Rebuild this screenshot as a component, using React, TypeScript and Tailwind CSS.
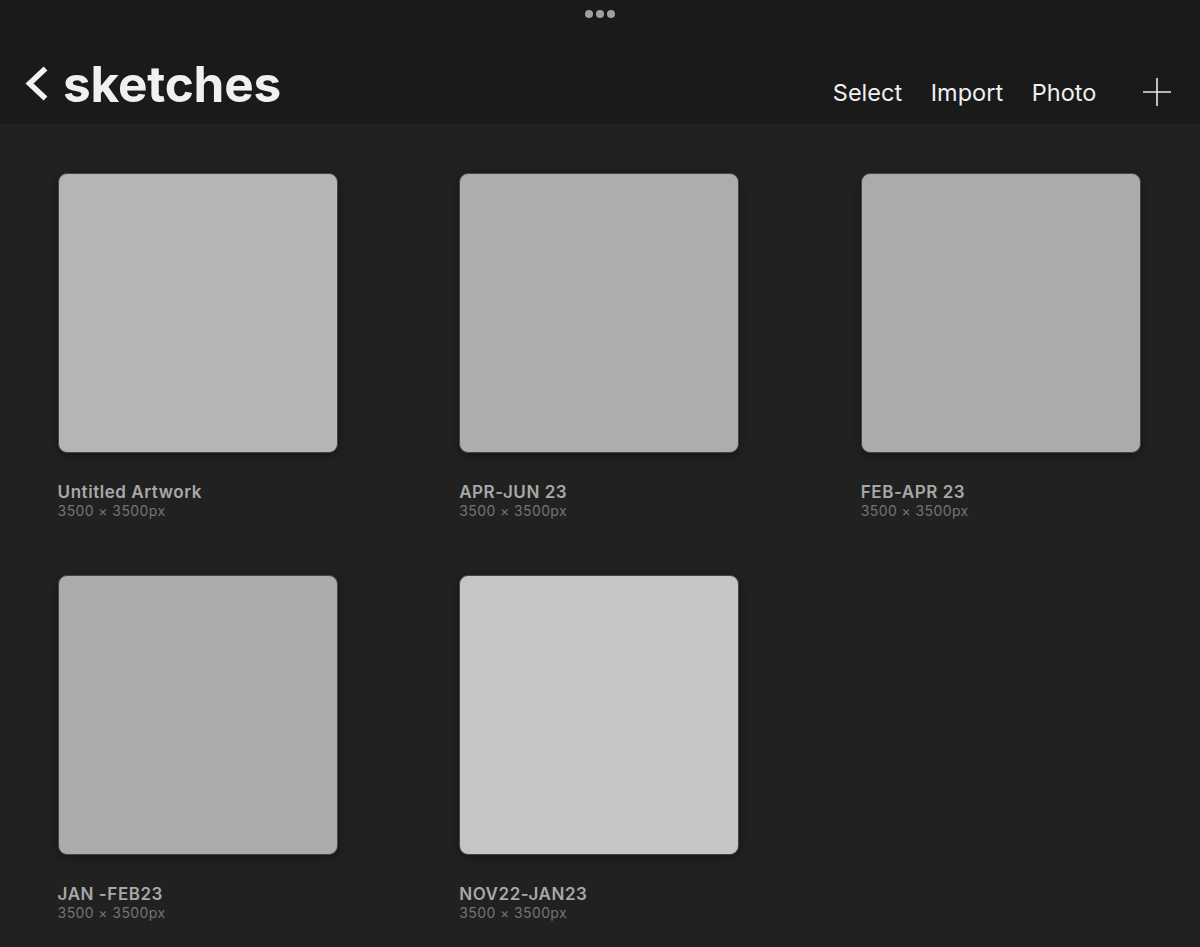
const items = [
  { name: "Untitled Artwork", bg: "bg-[#b5b5b5]" },
  { name: "APR-JUN 23", bg: "bg-[#adadad]" },
  { name: "FEB-APR 23", bg: "bg-[#ababab]" },
  { name: "JAN -FEB23", bg: "bg-[#acacac]" },
  { name: "NOV22-JAN23", bg: "bg-[#c5c5c5]" },
];

export default function App() {
  return (
    <div className="w-[1200px] h-[947px] overflow-hidden bg-[#212121] font-['Inter','Liberation_Sans',sans-serif]">
      <header className="relative h-[124px] bg-[#1a1a1a] flex items-start pt-[55px] pl-[24px] pr-[29px]">
        <div className="absolute top-[10px] left-[585px] flex gap-[3.5px]">
          <span className="w-[7.5px] h-[7.5px] rounded-full bg-[#a0a0a0]" />
          <span className="w-[7.5px] h-[7.5px] rounded-full bg-[#a0a0a0]" />
          <span className="w-[7.5px] h-[7.5px] rounded-full bg-[#a0a0a0]" />
        </div>
        <svg className="mt-[11px] w-[24px] h-[36px]" viewBox="0 0 24 36" fill="none" stroke="#f2f2f2" strokeWidth="5.5">
          <path d="M21.5 2.5 L5.5 17.5 L21.5 32.5" />
        </svg>
        <h1 className="ml-[15px] text-[49.5px] leading-[59px] font-bold tracking-[-0.2px] text-[#f0f0f0]">sketches</h1>
        <nav className="ml-auto flex items-center gap-[28.7px] mt-[19px] text-[23.5px] leading-[34px] text-[#f0f0f0]">
          <span className="mt-[2px]">Select</span>
          <span className="mt-[2px]">Import</span>
          <span className="mt-[2px]">Photo</span>
          <svg className="ml-[18px] w-[28px] h-[28px]" viewBox="0 0 28 28" stroke="#e8e8e8" strokeWidth="1.6">
            <path d="M14 0V28M0 14H28" />
          </svg>
        </nav>
      </header>
      <main className="grid grid-cols-[280px_280px_280px] gap-x-[121.6px] gap-y-[56px] pl-[57.6px] pt-[49px]">
        {items.map((it) => (
          <div key={it.name}>
            <div className={`h-[280px] rounded-[9px] border border-[#444444] shadow-[0_2px_10px_rgba(0,0,0,0.4)] ${it.bg}`} />
            <div className="mt-[29px] text-[17px] leading-[20px] font-semibold tracking-[0.55px] text-[#a8a8a8]">{it.name}</div>
            <div className="text-[14px] leading-[17px] tracking-[0.4px] text-[#747474]">3500 × 3500px</div>
          </div>
        ))}
      </main>
    </div>
  );
}
